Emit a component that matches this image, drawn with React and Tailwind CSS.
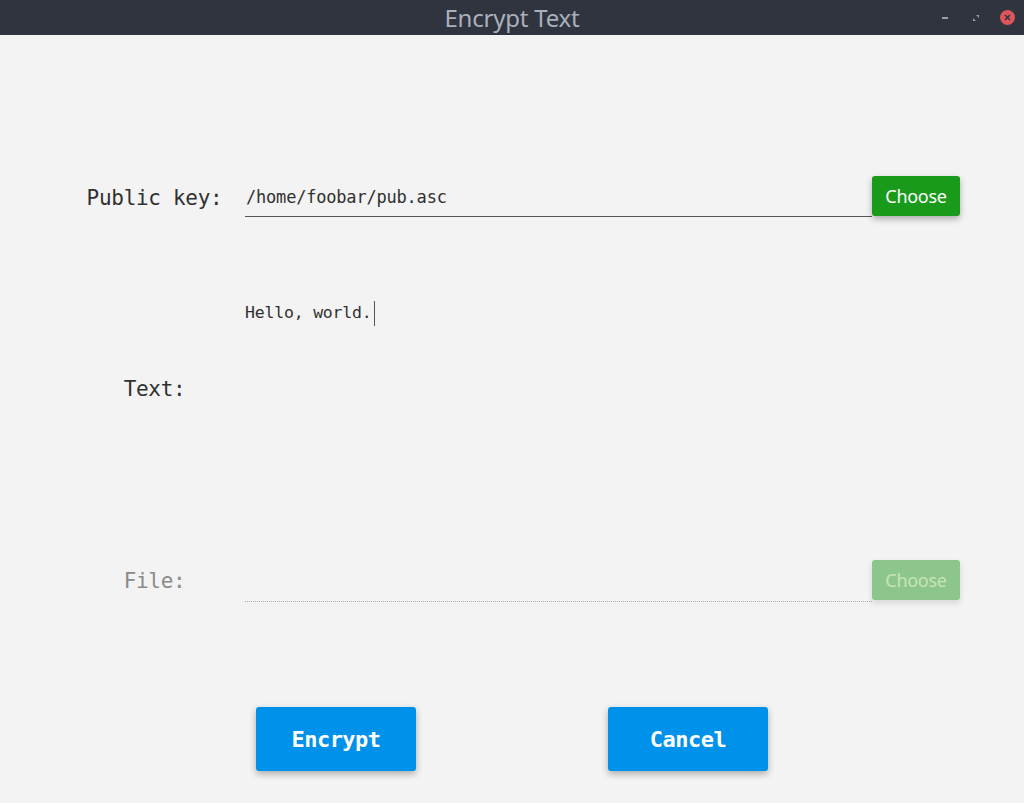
export default function App() {
  const mono = { fontFamily: '"DejaVu Sans Mono", "Liberation Mono", monospace' };
  return (
    <div className="w-[1024px] h-[803px] bg-[#f3f3f3] flex flex-col overflow-hidden" style={mono}>
      {/* Title bar */}
      <div className="h-[35px] bg-[#2f343f] flex items-center relative shrink-0">
        <div className="flex-1 text-center text-[24px] text-[#aab0bb] tracking-[-0.2px]" style={{ fontFamily: '"Noto Sans", sans-serif' }}>
          Encrypt Text
        </div>
        <div className="absolute right-[9px] top-0 h-[35px] flex items-center gap-[20px]">
          <div className="w-[6px] h-[2px] bg-[#9aa0aa] mt-[1px]" />
          <svg width="8" height="8" viewBox="0 0 8 8" className="ml-[4px]">
            <path d="M4 1 L7 1 L7 4 Z" fill="#9aa0aa" />
            <path d="M1 4 L1 7 L4 7 Z" fill="#9aa0aa" />
          </svg>
          <div className="w-[15px] h-[15px] rounded-full bg-[#e0555b] flex items-center justify-center">
            <svg width="7" height="7" viewBox="0 0 7 7">
              <path d="M1 1 L6 6 M6 1 L1 6" stroke="#2f343f" strokeWidth="1.6" />
            </svg>
          </div>
        </div>
      </div>

      {/* Public key row */}
      <div className="mt-[141px] h-[40px] flex items-start">
        <div className="ml-[67px] w-[175px] h-[40px] pt-[5px] flex items-center justify-center text-[21px] text-[#303030] tracking-[-0.3px]">Public key:</div>
        <div className="ml-[3px] w-[627px] h-[41px] pt-[3px] border-b border-[#555555] flex items-center pl-[1px] text-[17px] text-[#303030] tracking-[-0.2px]">
          /home/foobar/pub.asc
        </div>
        <button className="w-[88px] h-[40px] rounded-[3px] bg-[#1a9a1a] text-white text-[18px] shadow-[0_3px_6px_rgba(0,0,0,0.3)]">
          <span className="tracking-[-0.3px]" style={{ fontFamily: '"Liberation Sans Narrow","Noto Sans", sans-serif' }}>Choose</span>
        </button>
      </div>

      {/* Text row */}
      <div className="mt-[80px] h-[184px] flex">
        <div className="ml-[67px] w-[175px] pt-[4px] flex items-center justify-center text-[21px] text-[#303030] tracking-[-0.3px]">Text:</div>
        <div className="ml-[3px] w-[627px] pt-[5px]">
          <div className="flex items-center h-[25px] text-[16.5px] text-[#303030] tracking-[-0.2px]">
            <span>Hello, world.</span>
            <span className="w-[1px] h-[25px] bg-[#555] ml-[2px]" />
          </div>
        </div>
      </div>

      {/* File row */}
      <div className="mt-[80px] h-[40px] flex items-start">
        <div className="ml-[67px] w-[175px] h-[40px] pt-[4px] flex items-center justify-center text-[21px] text-[#8a8a8a] tracking-[-0.3px]">File:</div>
        <div className="ml-[3px] w-[627px] h-[42px] border-b border-dotted border-[#aaaaaa]" />
        <button className="w-[88px] h-[40px] rounded-[3px] bg-[#8dc68d] text-[#c9e4b4] text-[18px] shadow-[0_3px_6px_rgba(0,0,0,0.12)]">
          <span className="tracking-[-0.3px]" style={{ fontFamily: '"Liberation Sans Narrow","Noto Sans", sans-serif' }}>Choose</span>
        </button>
      </div>

      {/* Buttons */}
      <div className="mt-[107px] flex">
        <button className="ml-[256px] w-[160px] h-[64px] rounded-[3px] bg-[#0091ea] text-white text-[22px] font-bold shadow-[0_3px_7px_rgba(0,0,0,0.3)] tracking-[-0.5px]">
          Encrypt
        </button>
        <button className="ml-[192px] w-[160px] h-[64px] rounded-[3px] bg-[#0091ea] text-white text-[22px] font-bold shadow-[0_3px_7px_rgba(0,0,0,0.3)] tracking-[-0.5px]">
          Cancel
        </button>
      </div>
    </div>
  );
}
